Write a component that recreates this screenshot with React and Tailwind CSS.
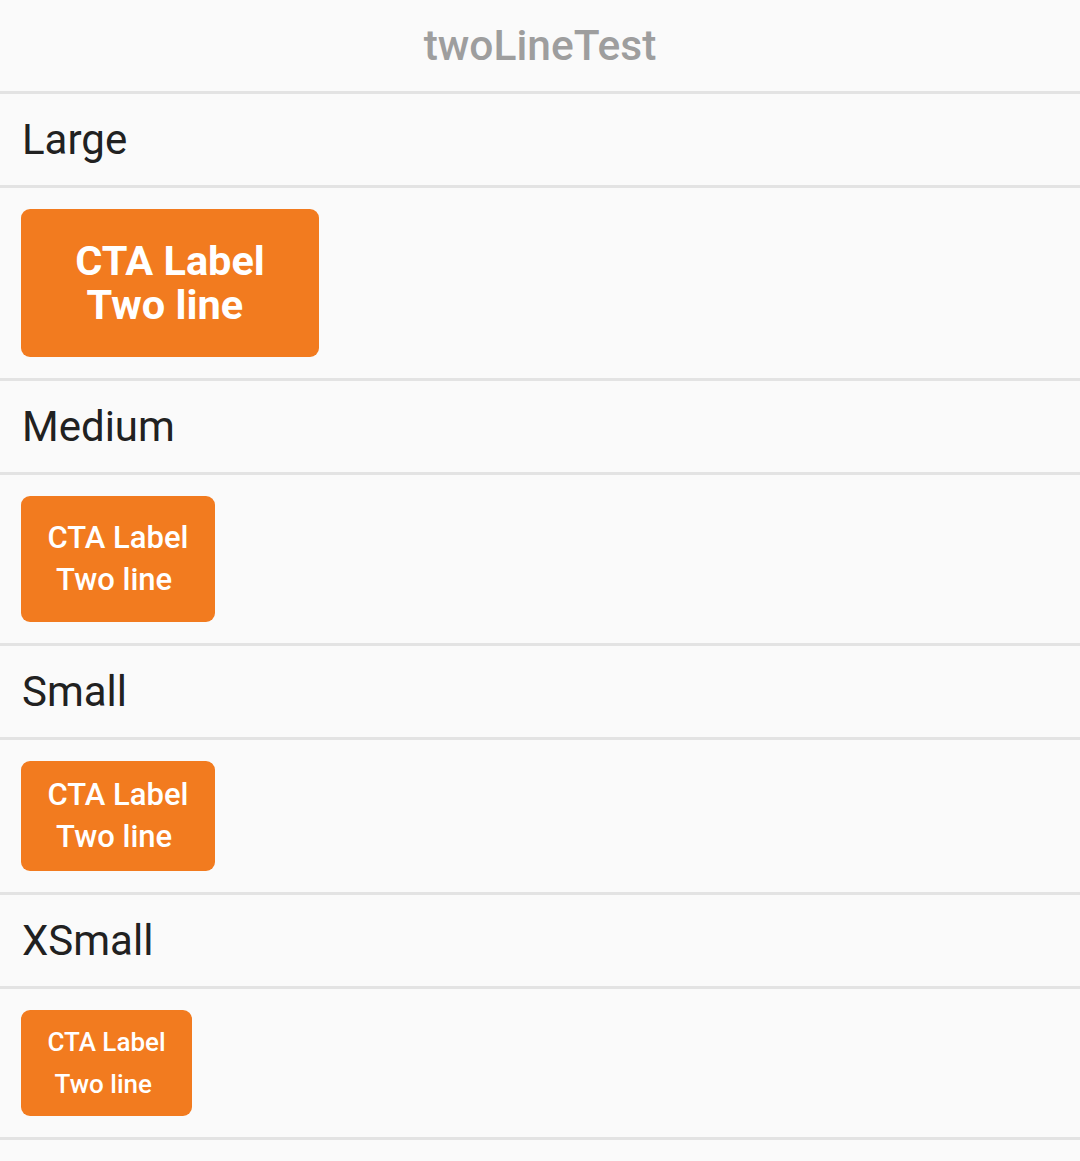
import React from 'react';

const sections = [
  { label: 'Large', size: 'large' },
  { label: 'Medium', size: 'medium' },
  { label: 'Small', size: 'small' },
  { label: 'XSmall', size: 'xsmall' },
];

const botoes = {
  large: 'w-[298px] h-[148px] text-[41.5px] leading-[44px] font-bold',
  medium: 'w-[194px] h-[126px] text-[31px] leading-[42px] font-medium',
  small: 'w-[194px] h-[110px] text-[31px] leading-[42px] font-medium',
  xsmall: 'w-[171px] h-[106px] text-[26px] leading-[42px] font-medium',
};

export default function App() {
  return (
    <div className="min-h-[1161px] bg-[#fafafa] font-['Roboto',sans-serif]">
      <div className="h-[94px] flex items-center justify-center border-b-[3px] border-[#e3e3e3]">
        <span className="text-[42.5px] font-medium text-[#9e9e9e]">twoLineTest</span>
      </div>

      {sections.map((s) => (
        <React.Fragment key={s.size}>
          <div className="h-[94px] flex items-center px-[22px] border-b-[3px] border-[#e3e3e3]">
            <span className="text-[42px] text-[#212121]">{s.label}</span>
          </div>
          <div className="p-[21px] border-b-[3px] border-[#e3e3e3]">
            <CtaButton size={s.size} />
          </div>
        </React.Fragment>
      ))}
    </div>
  );
}

function CtaButton({ size }) {
  return (
    <div
      className={`flex flex-col items-center justify-center rounded-[9px] bg-[#f27b1f] text-white text-center whitespace-pre ${botoes[size]}`}
    >
      <span>CTA Label</span>
      <span>{'Two line\u00a0'}</span>
    </div>
  );
}
